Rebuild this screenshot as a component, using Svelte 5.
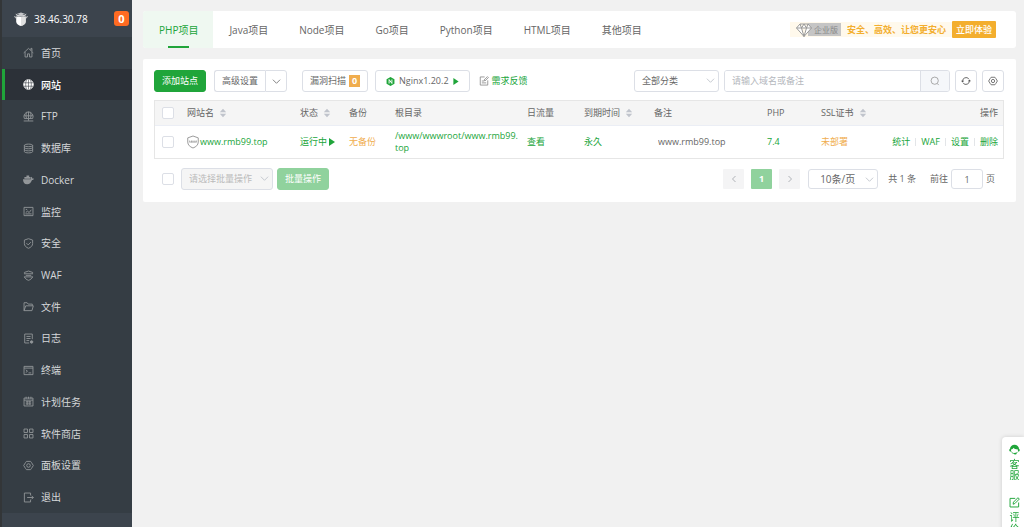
<script lang="ts">
	interface MenuItem {
		name: string;
		icon: string;
	}

	const menu: MenuItem[] = [
		{ name: '首页', icon: 'home' },
		{ name: '网站', icon: 'site' },
		{ name: 'FTP', icon: 'ftp' },
		{ name: '数据库', icon: 'database' },
		{ name: 'Docker', icon: 'docker' },
		{ name: '监控', icon: 'monitor' },
		{ name: '安全', icon: 'safe' },
		{ name: 'WAF', icon: 'waf' },
		{ name: '文件', icon: 'files' },
		{ name: '日志', icon: 'logs' },
		{ name: '终端', icon: 'term' },
		{ name: '计划任务', icon: 'cron' },
		{ name: '软件商店', icon: 'soft' },
		{ name: '面板设置', icon: 'config' },
		{ name: '退出', icon: 'exit' }
	];

	const tabs = ['PHP项目', 'Java项目', 'Node项目', 'Go项目', 'Python项目', 'HTML项目', '其他项目'];

	const sites = [
		{
			name: 'www.rmb99.top',
			status: '运行中',
			backup: '无备份',
			path: '/www/wwwroot/www.rmb99.top',
			expire: '永久',
			remark: 'www.rmb99.top',
			php: '7.4',
			ssl: '未部署'
		}
	];

	const actions = ['统计', 'WAF', '设置', '删除'];

	let activeMenu = $state('网站');
	let activeTab = $state('PHP项目');
	let search = $state('');
	let page = $state(1);
	let selected = $state<boolean[]>(sites.map(() => false));

	let anySelected = $derived(selected.some(Boolean));

	function toggleAll(e: Event) {
		const on = (e.target as HTMLInputElement).checked;
		selected = sites.map(() => on);
	}
</script>

{#snippet chevron()}
	<svg class="chevron" viewBox="0 0 10 10" width="9" height="9" fill="none" stroke="currentColor" stroke-width="1"><path d="M1 3l4 4 4-4" /></svg>
{/snippet}

{#snippet sorter()}
	<svg class="sorter" viewBox="0 0 8 10" width="8" height="10" fill="#c0c4cc"><path d="M4 0.8L7.2 4.2H0.8zM4 9.2L7.2 5.8H0.8z" /></svg>
{/snippet}

{#snippet menuIcon(name: string)}
	<svg class="menu-icon" viewBox="0 0 16 16" width="11" height="11" fill="none" stroke="currentColor" stroke-width="1.3">
		{#if name === 'home'}
			<path d="M1 8.5L8 2l7 6.5M3 7v7.5h3.5V10h3v4.5H13V7M11.5 4.5V2H13v4" />
		{:else if name === 'site'}
			<circle cx="8" cy="8" r="7" fill="currentColor" />
			<path d="M1 5.5h14M1 10.5h14M8 1v14M5 1.5c-1.5 4-1.5 9 0 13M11 1.5c1.5 4 1.5 9 0 13" stroke="#2c3138" stroke-width="0.8" />
		{:else if name === 'ftp'}
			<path d="M2 11a6.7 6.7 0 1 1 12 0zM1.5 7h13M8 1v10M5.3 2c-1.3 3-1.3 6 0 9M10.7 2c1.3 3 1.3 6 0 9M1 14.5h14M8 11v3" />
		{:else if name === 'database'}
			<path d="M2 3.5C2 1 14 1 14 3.5v9c0 2.5-12 2.5-12 0zM2 3.5C2 6 14 6 14 3.5M2 6.5C2 9 14 9 14 6.5M2 9.5c0 2.5 12 2.5 12 0" />
		{:else if name === 'docker'}
			<path d="M0 7.500h11.500c-.3-1.500 0-2.700.7-3.500 1 .7 1.400 1.500 1.300 2.500.9-.2 1.800 0 2.500.5-.5 1.300-1.500 1.900-2.900 1.900C11.600 13 9.500 15 6 15 2 15 0 12 0 7.500zM2 4.500h9V7H2zM5 2h4v2.500H5z" fill="currentColor" stroke="none" />
		{:else if name === 'monitor'}
			<path d="M1.500 2h13v12h-13zM4 5h2M3.500 11.500h9M4 9.500l2.500-2 2.500 2 3-4" />
		{:else if name === 'safe'}
			<path d="M8 1l6 2v5c0 3.500-2.500 5.500-6 7-3.500-1.500-6-3.500-6-7V3zM5 7.500l2.500 2.500L11.500 6" />
		{:else if name === 'waf'}
			<path d="M2 5V3.500L8 1.500l6 2V5M2 10c1 2.500 3 4 6 5 3-1 5-2.500 6-5M1.500 5.500h13M1.500 10h13M4 7.800h8" />
		{:else if name === 'files'}
			<path d="M1.500 14V2.500h4.500l1.500 2h6v2.500M1.500 14L4 7h11l-2 7z" />
		{:else if name === 'logs'}
			<path d="M13.500 9V1.500h-11v13H9M5 5h6M5 8h6M5 11h4" />
			<circle cx="12.500" cy="13" r="1.800" fill="currentColor" />
		{:else if name === 'term'}
			<path d="M1.500 2h13v12h-13zM1.500 4.500h13M4 7l2.500 2L4 11M8 11.500h4" />
		{:else if name === 'cron'}
			<path d="M1.500 3h13v11.500h-13zM1.500 6h13M4.500 1v3M8 1v3M11.500 1v3M4 8.500h8M4 11.500h8M6 7v6M10 7v6" />
		{:else if name === 'soft'}
			<path d="M1.500 1.500h5v5h-5zM9.500 1.500h5v5h-5zM1.500 9.500h5v5h-5zM9.500 9.500h5v5h-5z" />
		{:else if name === 'config'}
			<path d="M5 2h6l1.500 2L15 8l-2.500 4L11 14H5l-1.500-2L1 8l2.500-4z" />
			<circle cx="8" cy="8" r="2.600" />
		{:else}
			<path d="M11 5V1.500H2v13h9V11M6 8h9M12.500 5.500L15 8l-2.500 2.500" />
		{/if}
	</svg>
{/snippet}

<div class="panel">
	<aside class="sidebar">
		<header class="server">
			<svg viewBox="0 0 16 16" width="14" height="14" fill="#fff">
				<path d="M8 0.500L14 2.500H9.500L15.500 5H.5L6.500 2.500H2z" opacity="0.700" />
				<path d="M2.500 5.500h11V11c0 2.500-3 4-5.500 5-2.500-1-5.500-2.500-5.500-5z" />
				<path d="M8 5.500v10.500c2.500-1 5.500-2.500 5.500-5V5.500z" fill="#ccc" opacity="0.600" />
				<path d="M.5 5l2 2.500M15.500 5l-2 2.500M2 2.500L6 5M14 2.500L10 5" stroke="#ddd" />
			</svg>
			<span class="ip">38.46.30.78</span>
			<span class="msg-count">0</span>
		</header>
		<nav class="menu">
			{#each menu as item}
				<a href="#{item.icon}" class:active={activeMenu === item.name} onclick={() => (activeMenu = item.name)}>
					{@render menuIcon(item.icon)}
					<span>{item.name}</span>
				</a>
			{/each}
		</nav>
	</aside>

	<main class="content">
		<section class="tabs">
			{#each tabs as tab}
				<button class="tab" class:active={activeTab === tab} onclick={() => (activeTab = tab)}>{tab}</button>
			{/each}
			<div class="promo">
				<svg viewBox="0 0 16 14" width="16" height="14" fill="#fff" stroke="#999" stroke-width="1">
					<path d="M4 1h8l3.500 4L8 13.500.5 5zM.5 5h15M4 1l1.500 4L8 13.500 10.500 5 12 1M5.500 5L8 1l2.500 4" />
				</svg>
				<span class="edition">企业版</span>
				<strong>安全、高效、让您更安心</strong>
				<a class="try" href="#pro">立即体验</a>
			</div>
		</section>

		<section class="card">
			<div class="toolbar">
				<button class="btn primary">添加站点</button>
				<div class="split">
					<button class="btn">高级设置</button>
					<button class="btn more" aria-label="更多">{@render chevron()}</button>
				</div>
				<button class="btn scan">漏洞扫描<span class="scan-count">0</span></button>
				<button class="btn nginx">
					<svg viewBox="0 0 16 16" width="9" height="9">
						<path d="M8 0l7 4v8l-7 4-7-4V4z" fill="#20a53a" />
						<path d="M5.500 11.500v-7l5 7v-7" stroke="#fff" stroke-width="1.700" fill="none" />
					</svg>
					Nginx1.20.2
					<svg viewBox="0 0 6 8" width="6" height="7" fill="#20a53a"><path d="M0 0l6 4-6 4z" /></svg>
				</button>
				<a class="feedback" href="#feedback">
					<svg viewBox="0 0 16 16" width="10" height="10" fill="none" stroke="#888" stroke-width="1.300">
						<path d="M9 1.500H2v13h12V7M4.500 8h4M4.500 11h7M8 6.500L13.500 1l1.500 1.500L9.500 8z" />
					</svg>
					<span>需求反馈</span>
				</a>

				<div class="select category">
					<select aria-label="分类"><option>全部分类</option></select>
					{@render chevron()}
				</div>
				<div class="search">
					<input type="text" placeholder="请输入域名或备注" aria-label="搜索" bind:value={search} />
					<button aria-label="搜索">
						<svg viewBox="0 0 16 16" width="10" height="10" fill="none" stroke="#999" stroke-width="1.300"><circle cx="7.500" cy="7.500" r="5.800" /><path d="M11.500 12l2.500 2.500" /></svg>
					</button>
				</div>
				<button class="btn square" aria-label="刷新">
					<svg viewBox="0 0 16 16" width="10" height="10" fill="none" stroke="#555" stroke-width="1.400">
						<path d="M2.500 8.500A5.700 5.700 0 0 1 12.500 4.500M13.500 7.500A5.700 5.700 0 0 1 3.500 11.500" />
						<path d="M0 7.500h5L2.500 10.500zM16 8.500h-5L13.500 5.500z" fill="#555" stroke="none" />
					</svg>
				</button>
				<button class="btn square" aria-label="设置">
					<svg viewBox="0 0 16 16" width="10" height="10" fill="none" stroke="#666" stroke-width="1.400">
						<path d="M5 2h6l1.500 2L15 8l-2.500 4L11 14H5l-1.500-2L1 8l2.500-4z" /><circle cx="8" cy="8" r="2.600" />
					</svg>
				</button>
			</div>

			<table>
				<colgroup>
					<col class="c-check" />
					<col class="c-name" />
					<col class="c-status" />
					<col class="c-backup" />
					<col class="c-path" />
					<col class="c-flow" />
					<col class="c-expire" />
					<col />
					<col class="c-php" />
					<col class="c-ssl" />
					<col class="c-action" />
				</colgroup>
				<thead>
					<tr>
						<th class="check"><input type="checkbox" aria-label="全选" onchange={toggleAll} /></th>
						<th>网站名{@render sorter()}</th>
						<th>状态{@render sorter()}</th>
						<th>备份</th>
						<th>根目录</th>
						<th>日流量</th>
						<th>到期时间{@render sorter()}</th>
						<th>备注</th>
						<th>PHP</th>
						<th>SSL证书{@render sorter()}</th>
						<th class="right">操作</th>
					</tr>
				</thead>
				<tbody>
					{#each sites as site, i}
						<tr>
							<td class="check"><input type="checkbox" aria-label={site.name} bind:checked={selected[i]} /></td>
							<td>
								<a class="site" href="#site">
									<svg viewBox="0 0 16 18" width="12" height="14" fill="none" stroke="#999" stroke-width="1.300">
										<path d="M8 1l7 2.500V9c0 4-3 6.500-7 8-4-1.500-7-4-7-8V3.500z" />
										<path d="M3.500 7v2.500M6 7v2.500M8 7v2.500M10.500 7v2.500M12.500 7v2.500M3.500 9h9" stroke-width="1" />
									</svg>
									{site.name}
								</a>
							</td>
							<td>
								<a class="running" href="#status">
									{site.status}
									<svg viewBox="0 0 6 8" width="6" height="8" fill="#20a53a"><path d="M0 0l6 4-6 4z" /></svg>
								</a>
							</td>
							<td><a class="warn" href="#backup">{site.backup}</a></td>
							<td class="path"><a href="#path">{site.path}</a></td>
							<td><a href="#flow">查看</a></td>
							<td><a href="#expire">{site.expire}</a></td>
							<td><input class="remark" type="text" aria-label="备注" value={site.remark} /></td>
							<td><a href="#php">{site.php}</a></td>
							<td><a class="warn" href="#ssl">{site.ssl}</a></td>
							<td>
								<div class="actions">
									{#each actions as action}
										<a href="#action">{action}</a>
									{/each}
								</div>
							</td>
						</tr>
					{/each}
				</tbody>
			</table>

			<footer class="table-foot">
				<input type="checkbox" aria-label="全选" onchange={toggleAll} />
				<div class="select batch">
					<select aria-label="批量操作" disabled={!anySelected}><option>请选择批量操作</option></select>
					{@render chevron()}
				</div>
				<button class="btn primary" disabled={!anySelected}>批量操作</button>

				<div class="pager">
					<button class="prev" aria-label="上一页" disabled>
						<svg viewBox="0 0 8 8" width="8" height="8" fill="none" stroke="currentColor"><path d="M5.500 1l-3 3 3 3" /></svg>
					</button>
					<button class="current">{page}</button>
					<button class="next" aria-label="下一页" disabled>
						<svg viewBox="0 0 8 8" width="8" height="8" fill="none" stroke="currentColor"><path d="M2.500 1l3 3-3 3" /></svg>
					</button>
				</div>
				<div class="select size">
					<select aria-label="每页条数"><option>10条/页</option></select>
					{@render chevron()}
				</div>
				<span class="total">共 {sites.length} 条</span>
				<label class="jump">前往<input type="text" bind:value={page} />页</label>
			</footer>
		</section>
	</main>

	<div class="float-bar">
		<a href="#service">
			<svg viewBox="0 0 16 16" width="11" height="11" fill="#20a53a">
				<path d="M1.500 7a6.500 6 0 0 1 13 0c1.500 0 1.500 4 0 4h-1.500V8C10 8 7.500 7 6.500 5.500 6 7 4.500 8 3 8v3H1.500C0 11 0 7 1.500 7z" />
				<path d="M3.500 11c1 3.500 7 4 9 .5" stroke="#20a53a" fill="none" stroke-width="1.200" />
				<ellipse cx="9" cy="14" rx="2" ry="1.200" />
			</svg>
			<span>客服</span>
		</a>
		<a href="#review">
			<svg viewBox="0 0 16 16" width="11" height="11" fill="none" stroke="#20a53a" stroke-width="1.400">
				<path d="M9 2H1.500v12.500H14V8M6 10.500l.5-3L13 1l2 2-6.500 6.500z" />
			</svg>
			<span>评价</span>
		</a>
	</div>
</div>

<style>
	:global(body) {
		overflow: hidden;
	}

	.panel {
		display: flex;
		min-height: 100vh;
		background: #f1f1f1;
		color: #666;
		font-family: 'Open Sans', 'Noto Sans CJK SC', sans-serif;
		font-size: 9px;
		line-height: 12px;
	}

	.panel * {
		box-sizing: border-box;
	}

	button,
	input,
	select {
		margin: 0;
		font: inherit;
		color: inherit;
	}

	button {
		padding: 0;
		border: 0;
		cursor: pointer;
	}

	a {
		color: #20a53a;
		text-decoration: none;
	}

	svg {
		flex-shrink: 0;
	}

	/* sidebar */
	.sidebar {
		display: flex;
		flex-direction: column;
		flex-shrink: 0;
		width: 132px;
		padding-bottom: 14px;
		border-left: 2px solid #333638;
		background: #3c444d;
	}

	.server {
		display: flex;
		align-items: center;
		height: 37px;
		padding: 0 3px 0 12px;
		gap: 6px;
		color: #fff;
		font-size: 10px;
	}

	.ip {
		flex: 1;
	}

	.msg-count {
		width: 15px;
		border-radius: 3px;
		background: #ff6b22;
		font-size: 11px;
		font-weight: 700;
		line-height: 15px;
		text-align: center;
	}

	.menu {
		display: flex;
		flex: 1;
		flex-direction: column;
		background: #353d44;
	}

	.menu a {
		display: flex;
		flex: 1;
		align-items: center;
		gap: 7px;
		padding-left: 18px;
		border-left: 3px solid transparent;
		color: #d6d8da;
		font-size: 10px;
	}

	.menu a.active {
		border-left-color: #20a53a;
		background: #2c3138;
		color: #fff;
		font-weight: 500;
	}

	.menu-icon {
		color: #929699;
	}

	.active .menu-icon {
		color: #fff;
	}

	/* main area */
	.content {
		flex: 1;
		min-width: 0;
		padding: 11px 8px 11px 11px;
	}

	.tabs {
		display: flex;
		align-items: center;
		height: 37px;
		margin-bottom: 11px;
		border-radius: 3px;
		background: #fff;
	}

	.tab {
		position: relative;
		height: 100%;
		padding: 0 15px 0 16px;
		background: none;
		font-size: 10px;
		white-space: nowrap;
	}

	.tab.active {
		border-radius: 3px 0 0 3px;
		background: #eff8f1;
		color: #20a53a;
	}

	.tab.active::after {
		content: '';
		position: absolute;
		bottom: 0;
		left: 50%;
		width: 21px;
		height: 2px;
		margin-left: -10px;
		background: #20a53a;
	}

	.promo {
		display: flex;
		align-items: center;
		height: 15px;
		margin: 0 20px 0 auto;
		padding-left: 6px;
		background: #fff9ec;
		color: #f3ae2e;
		white-space: nowrap;
	}

	.promo svg {
		position: relative;
	}

	.edition {
		margin-left: -4px;
		padding: 0 3px 0 6px;
		background: #c5c5c5;
		color: #888;
		font-size: 8px;
		line-height: 13px;
	}

	.promo strong {
		padding: 0 6px;
	}

	.try {
		padding: 0 4px;
		border-radius: 1px;
		background: #f3ae2e;
		color: #fff;
		font-weight: 500;
		line-height: 17px;
	}

	.card {
		padding: 11px 12px 12px 11px;
		border-radius: 2px;
		background: #fff;
	}

	/* toolbar */
	.toolbar {
		display: flex;
		align-items: center;
		gap: 5px;
		margin-bottom: 8px;
	}

	.btn {
		display: flex;
		align-items: center;
		justify-content: center;
		height: 22px;
		padding: 0 7px;
		border: 1px solid #dcdfe6;
		border-radius: 3px;
		background: #fff;
		white-space: nowrap;
	}

	.btn.primary {
		border-color: #20a53a;
		background: #20a53a;
		color: #fff;
	}

	.btn.primary:disabled {
		border-color: #90d29d;
		background: #90d29d;
	}

	.split {
		display: flex;
		margin: 0 10px 0 3px;
	}

	.split .btn:first-child {
		border-right: 0;
		border-radius: 3px 0 0 3px;
	}

	.split .more {
		width: 22px;
		padding: 0;
		border-radius: 0 3px 3px 0;
		color: #777;
	}

	.scan {
		gap: 3px;
	}

	.scan-count {
		width: 11px;
		background: #f0ad4e;
		color: #fff;
		font-weight: 700;
	}

	.nginx {
		gap: 4px;
		margin-left: 2px;
		padding: 0 10px;
	}

	.feedback {
		display: flex;
		align-items: center;
		gap: 3px;
		margin: 0 auto 0 4px;
		white-space: nowrap;
	}

	.chevron {
		display: block;
	}

	.select {
		position: relative;
		flex-shrink: 0;
		height: 22px;
	}

	.select select {
		width: 100%;
		height: 100%;
		padding: 0 7px;
		border: 1px solid #dcdfe6;
		border-radius: 3px;
		background: #fff;
		appearance: none;
	}

	.select select:disabled {
		background: #f5f5f5;
		color: #bbb;
		opacity: 1;
	}

	.select .chevron {
		position: absolute;
		top: 6px;
		right: 4px;
		color: #c0c4cc;
		pointer-events: none;
	}

	.category {
		width: 85px;
	}

	.search {
		display: flex;
		flex: 0 1 226px;
		height: 22px;
		border: 1px solid #dcdfe6;
		border-radius: 3px;
		overflow: hidden;
	}

	.search input {
		flex: 1;
		min-width: 0;
		padding: 0 7px;
		border: 0;
		outline: 0;
	}

	.search input::placeholder {
		color: #b4b7bd;
	}

	.search button {
		display: grid;
		place-items: center;
		width: 29px;
		border-left: 1px solid #dcdfe6;
		background: #f5f7fa;
	}

	.square {
		width: 22px;
		padding: 0;
	}

	/* table */
	table {
		width: 100%;
		border: 1px solid #e6e6e6;
		border-collapse: separate;
		border-spacing: 0;
		table-layout: fixed;
	}

	.c-check { width: 26px; }
	.c-name { width: 113px; }
	.c-status { width: 49px; }
	.c-backup { width: 46px; }
	.c-path { width: 132px; }
	.c-flow { width: 57px; }
	.c-expire { width: 70px; }
	.c-php { width: 54px; }
	.c-ssl { width: 60px; }
	.c-action { width: 128px; }

	th,
	td {
		padding: 0 5px 0 6px;
		font-weight: 400;
		text-align: left;
		white-space: nowrap;
	}

	th {
		height: 25px;
		border-bottom: 1px solid #ebeef5;
		background: #f5f5f5;
	}

	td {
		height: 32px;
	}

	th.right {
		text-align: right;
	}

	.check {
		padding-left: 7px;
	}

	.sorter {
		margin-left: 5px;
		vertical-align: -2px;
	}

	input[type='checkbox'] {
		display: block;
		width: 12px;
		height: 12px;
		border: 1px solid #dcdfe6;
		border-radius: 2px;
		background: #fff;
		appearance: none;
	}

	input[type='checkbox']:checked {
		border-color: #20a53a;
		background: #20a53a;
	}

	.site {
		display: flex;
		align-items: center;
		gap: 1px;
	}

	.running {
		display: flex;
		align-items: center;
		gap: 2px;
	}

	.warn {
		color: #f0ad4e;
	}

	.path {
		padding-right: 0;
		white-space: normal;
		word-break: break-all;
	}

	.remark {
		width: 100%;
		padding: 0 4px;
		border: 0;
		background: none;
	}

	.actions {
		display: flex;
		justify-content: flex-end;
	}

	.actions a + a {
		margin-left: 5px;
		padding-left: 6px;
		background: linear-gradient(#e3e5e8, #e3e5e8) left center / 1px 8px no-repeat;
	}

	/* footer */
	.table-foot {
		display: flex;
		align-items: center;
		margin-top: 9px;
		padding-left: 8px;
	}

	.batch {
		width: 92px;
		margin: 0 4px 0 7px;
	}

	.pager {
		display: flex;
		gap: 7px;
		margin: 0 8px 0 auto;
	}

	.pager button {
		display: grid;
		place-items: center;
		width: 21px;
		height: 20px;
		border-radius: 1px;
		background: #f4f4f5;
		color: #b0b3b8;
	}

	.pager .current {
		background: #90d29d;
		color: #fff;
		font-weight: 700;
	}

	.size {
		width: 70px;
		height: 20px;
	}

	.size select {
		padding-left: 11px;
		font-size: 10px;
	}

	.total {
		margin: 0 14px 0 10px;
	}

	.jump {
		display: flex;
		align-items: center;
		gap: 3px;
		margin-right: 9px;
	}

	.jump input {
		width: 32px;
		height: 20px;
		border: 1px solid #dcdfe6;
		border-radius: 3px;
		text-align: center;
	}

	/* floating service links, cut off by the lower window edge */
	.float-bar {
		position: fixed;
		right: 0;
		bottom: -16px;
		display: flex;
		flex-direction: column;
		gap: 16px;
		width: 22px;
		padding: 7px 0 9px;
		border-radius: 4px 0 0 0;
		background: #fff;
		box-shadow: 0 0 4px rgba(0, 0, 0, 0.15);
	}

	.float-bar a {
		display: flex;
		flex-direction: column;
		align-items: center;
		gap: 4px;
		padding-left: 3px;
		font-size: 10px;
		line-height: 11px;
	}

	.float-bar span {
		width: 10px;
	}
</style>
